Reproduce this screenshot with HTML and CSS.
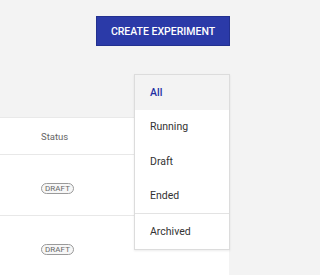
FILE: index.html
```html
<!DOCTYPE html>
<html>
<head>
<meta charset="utf-8">
<link rel="stylesheet" href="styles.css">
</head>
<body>
<div class="page">
  <div class="toolbar">
    <button class="create-btn">CREATE EXPERIMENT</button>
  </div>
  <div class="card">
    <div class="row head-row"><span class="status-col">Status</span></div>
    <div class="row body-row"><span class="status-col"><span class="badge">DRAFT</span></span></div>
    <div class="row body-row"><span class="status-col"><span class="badge">DRAFT</span></span></div>
  </div>
  <ul class="menu">
    <li class="item selected">All</li>
    <li class="item">Running</li>
    <li class="item">Draft</li>
    <li class="item">Ended</li>
    <li class="divider"></li>
    <li class="item">Archived</li>
  </ul>
</div>
</body>
</html>
```
FILE: styles.css
```css
* { box-sizing: border-box; }
html, body { margin: 0; padding: 0; }
body {
  background: #f3f3f3;
  font-family: Roboto, "Liberation Sans", sans-serif;
  width: 250px;
  height: 275px;
  overflow: hidden;
}
.page { position: relative; height: 275px; }
.toolbar {
  display: flex;
  justify-content: flex-end;
  padding: 16px 20px 0 0;
  height: 117px;
}
.create-btn {
  width: 134px;
  height: 30px;
  background: #2b3aa8;
  border: 1px solid #22308f;
  color: #fff;
  font-family: Roboto, "Liberation Sans", sans-serif;
  font-weight: 500;
  font-size: 10.5px;
  padding: 0;
  border-radius: 0;
}
.card {
  width: 229px;
  background: #fff;
  border-top: 1px solid #e9e9e9;
  height: 158px;
}
.row {
  display: flex;
  align-items: center;
  border-bottom: 1px solid #e8e8e8;
  padding-left: 41px;
}
.head-row { height: 37px; color: #666; font-size: 9.5px; }
.body-row { height: 61px; }
.badge {
  display: inline-flex;
  align-items: center;
  justify-content: center;
  border: 1px solid #9a9a9a;
  border-radius: 6px;
  font-size: 8px;
  height: 11px;
  width: 33px;
  padding: 0;
  color: #6a6a6a;
  background: #f7f7f7;
  letter-spacing: 0.1px;
}
.menu {
  position: absolute;
  left: 134px;
  top: 74px;
  width: 96px;
  margin: 0;
  padding: 0;
  list-style: none;
  background: #fff;
  border: 1px solid #dcdcdc;
  box-shadow: 0 1px 2px rgba(0,0,0,0.08);
}
.item {
  height: 34.5px;
  display: flex;
  align-items: center;
  padding-left: 15px;
  font-size: 10.5px;
  color: #333;
}
.item.selected {
  background: #f3f3f3;
  color: #1f2fa3;
  font-weight: 500;
}
.divider {
  height: 1px;
  background: #e3e3e3;
}
```
